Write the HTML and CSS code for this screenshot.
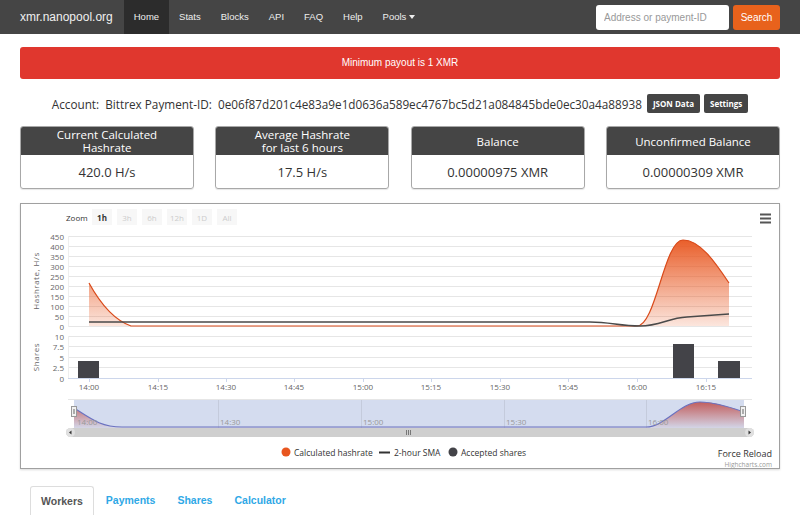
FILE: index.html
```html
<!DOCTYPE html>
<html lang="en">
<head>
  <meta charset="UTF-8">
  <title>xmr.nanopool.org</title>
  <link rel="stylesheet" href="styles.css">
</head>
<body>

  <!-- Navbar -->
  <div class="navbar">
    <a class="brand" href="#">xmr.nanopool.org</a>
    <nav class="nav">
      <a class="active" href="#">Home</a>
      <a href="#">Stats</a>
      <a href="#">Blocks</a>
      <a href="#">API</a>
      <a href="#">FAQ</a>
      <a href="#">Help</a>
      <a href="#">Pools <span class="caret"></span></a>
    </nav>
    <form class="search">
      <input type="text" placeholder="Address or payment-ID">
      <button type="button">Search</button>
    </form>
  </div>

  <div class="container">
    <div class="alert">Minimum payout is 1 XMR</div>

    <div class="account">
      <span class="account-text">Account:&nbsp; Bittrex Payment-ID:&nbsp; 0e06f87d201c4e83a9e1d0636a589ec4767bc5d21a084845bde0ec30a4a88938</span>
      <button class="btn-dark">JSON Data</button>
      <button class="btn-dark">Settings</button>
    </div>

    <!-- Stat cards -->
    <div class="cards">
      <div class="card">
        <div class="card-head"><span>Current Calculated</span><span>Hashrate</span></div>
        <div class="card-body">420.0 H/s</div>
      </div>
      <div class="card">
        <div class="card-head"><span>Average Hashrate</span><span>for last 6 hours</span></div>
        <div class="card-body">17.5 H/s</div>
      </div>
      <div class="card">
        <div class="card-head"><span>Balance</span></div>
        <div class="card-body">0.00000975 XMR</div>
      </div>
      <div class="card">
        <div class="card-head"><span>Unconfirmed Balance</span></div>
        <div class="card-body">0.00000309 XMR</div>
      </div>
    </div>

    <!-- Chart -->
    <div class="chart">
      <svg class="chart-svg" viewBox="21 204 758 264" width="758" height="264">
        <defs>
          <linearGradient id="hashFill" x1="0" y1="0" x2="0" y2="1">
            <stop offset="0" stop-color="#e8561f" stop-opacity="0.95"/>
            <stop offset="1" stop-color="#e8561f" stop-opacity="0.15"/>
          </linearGradient>
          <linearGradient id="navFill" x1="0" y1="0" x2="0" y2="1">
            <stop offset="0" stop-color="#c0504d" stop-opacity="0.9"/>
            <stop offset="1" stop-color="#c0504d" stop-opacity="0.05"/>
          </linearGradient>
        </defs>

        <!-- range selector -->
        <text x="66" y="221" class="t-zoom">Zoom</text>
        <rect x="92" y="209" width="20" height="16" fill="#f7f7f7"/>
        <text x="102" y="221" class="t-btn t-on">1h</text>
        <rect x="117" y="209" width="20" height="16" fill="#f7f7f7"/>
        <text x="127" y="221" class="t-btn">3h</text>
        <rect x="142" y="209" width="20" height="16" fill="#f7f7f7"/>
        <text x="152" y="221" class="t-btn">6h</text>
        <rect x="167" y="209" width="20" height="16" fill="#f7f7f7"/>
        <text x="177" y="221" class="t-btn">12h</text>
        <rect x="192" y="209" width="20" height="16" fill="#f7f7f7"/>
        <text x="202" y="221" class="t-btn">1D</text>
        <rect x="217" y="209" width="20" height="16" fill="#f7f7f7"/>
        <text x="227" y="221" class="t-btn">All</text>

        <!-- menu -->
        <g stroke="#555" stroke-width="2">
          <line x1="760" y1="214.5" x2="771" y2="214.5"/>
          <line x1="760" y1="218.5" x2="771" y2="218.5"/>
          <line x1="760" y1="222.5" x2="771" y2="222.5"/>
        </g>

        <!-- hashrate grid -->
        <g stroke="#e6e6e6" stroke-width="1">
          <line x1="68" y1="236.5" x2="752" y2="236.5"/>
          <line x1="68" y1="246.5" x2="752" y2="246.5"/>
          <line x1="68" y1="256.5" x2="752" y2="256.5"/>
          <line x1="68" y1="266.5" x2="752" y2="266.5"/>
          <line x1="68" y1="276.5" x2="752" y2="276.5"/>
          <line x1="68" y1="286.5" x2="752" y2="286.5"/>
          <line x1="68" y1="296.5" x2="752" y2="296.5"/>
          <line x1="68" y1="306.5" x2="752" y2="306.5"/>
          <line x1="68" y1="316.5" x2="752" y2="316.5"/>
          <line x1="68" y1="326.5" x2="752" y2="326.5"/>
          <line x1="68" y1="336.5" x2="752" y2="336.5"/>
          <line x1="68" y1="346.5" x2="752" y2="346.5"/>
          <line x1="68" y1="357.5" x2="752" y2="357.5"/>
          <line x1="68" y1="367.5" x2="752" y2="367.5"/>
        </g>
        <line x1="68" y1="378.5" x2="752" y2="378.5" stroke="#ccd6eb"/>
        <line x1="68.5" y1="236" x2="68.5" y2="327" stroke="#eee"/>
        <line x1="68.5" y1="336" x2="68.5" y2="378" stroke="#eee"/>

        <g class="t-axis" text-anchor="end">
          <text x="64" y="240">450</text>
          <text x="64" y="250">400</text>
          <text x="64" y="260">350</text>
          <text x="64" y="270">300</text>
          <text x="64" y="280">250</text>
          <text x="64" y="290">200</text>
          <text x="64" y="300">150</text>
          <text x="64" y="310">100</text>
          <text x="64" y="320">50</text>
          <text x="64" y="330">0</text>
          <text x="64" y="340">10</text>
          <text x="64" y="350">7.5</text>
          <text x="64" y="361">5</text>
          <text x="64" y="371">2.5</text>
          <text x="64" y="382">0</text>
        </g>
        <text class="t-title" transform="translate(39 281) rotate(-90)">Hashrate, H/s</text>
        <text class="t-title" transform="translate(39 357) rotate(-90)">Shares</text>

        <!-- hashrate area -->
        <path d="M89,283 C100,303 114,320 131,326 L637,326 C656,326 664,240 683,240 C700,240 715,262 729,283 L729,326 L89,326 Z" fill="url(#hashFill)"/>
        <path d="M89,283 C100,303 114,320 131,326 L637,326 C656,326 664,240 683,240 C700,240 715,262 729,283" fill="none" stroke="#d94a1a" stroke-width="1.2"/>
        <!-- SMA -->
        <path d="M89,322 L590,322 C610,322 620,326 640,326 C660,326 668,318 687,317 C700,316 715,315 729,314" fill="none" stroke="#4a4a4a" stroke-width="1.5"/>

        <!-- share bars -->
        <rect x="78" y="361" width="21" height="17" fill="#434348"/>
        <rect x="673" y="344" width="21" height="34" fill="#434348"/>
        <rect x="718" y="361" width="22" height="17" fill="#434348"/>

        <!-- x axis -->
        <g stroke="#ccd6eb">
          <line x1="89.5" y1="378" x2="89.5" y2="382"/>
          <line x1="158.5" y1="378" x2="158.5" y2="382"/>
          <line x1="226.5" y1="378" x2="226.5" y2="382"/>
          <line x1="294.5" y1="378" x2="294.5" y2="382"/>
          <line x1="363.5" y1="378" x2="363.5" y2="382"/>
          <line x1="431.5" y1="378" x2="431.5" y2="382"/>
          <line x1="500.5" y1="378" x2="500.5" y2="382"/>
          <line x1="568.5" y1="378" x2="568.5" y2="382"/>
          <line x1="637.5" y1="378" x2="637.5" y2="382"/>
          <line x1="706.5" y1="378" x2="706.5" y2="382"/>
        </g>
        <g class="t-axis" text-anchor="middle">
          <text x="89" y="390">14:00</text>
          <text x="158" y="390">14:15</text>
          <text x="226" y="390">14:30</text>
          <text x="294" y="390">14:45</text>
          <text x="363" y="390">15:00</text>
          <text x="431" y="390">15:15</text>
          <text x="500" y="390">15:30</text>
          <text x="568" y="390">15:45</text>
          <text x="637" y="390">16:00</text>
          <text x="706" y="390">16:15</text>
        </g>

        <!-- navigator -->
        <rect x="74" y="400" width="670" height="28" fill="#d4dcef"/>
        <g stroke="#c4cbdc">
          <line x1="218.5" y1="400" x2="218.5" y2="428"/>
          <line x1="361.5" y1="400" x2="361.5" y2="428"/>
          <line x1="504.5" y1="400" x2="504.5" y2="428"/>
          <line x1="646.5" y1="400" x2="646.5" y2="428"/>
        </g>
        <path d="M74,408 C90,418 100,427 122,427 L646,427 C665,427 680,402 700,402 C715,402 730,407 744,412 L744,428 L74,428 Z" fill="url(#navFill)"/>
        <path d="M74,408 C90,418 100,427 122,427 L646,427 C665,427 680,402 700,402 C715,402 730,407 744,412" fill="none" stroke="#6a72c0" stroke-width="1.2"/>
        <g class="t-nav">
          <text x="77" y="425">14:00</text>
          <text x="220" y="425">14:30</text>
          <text x="363" y="425">15:00</text>
          <text x="506" y="425">15:30</text>
          <text x="648" y="425">16:00</text>
        </g>
        <line x1="68" y1="399.5" x2="752" y2="399.5" stroke="#e6e6e6"/>
        <rect x="71.5" y="406.5" width="5" height="10" fill="#f2f2f2" stroke="#999"/>
        <line x1="74" y1="409" x2="74" y2="414" stroke="#666"/>
        <rect x="740.5" y="406.5" width="5" height="10" fill="#f2f2f2" stroke="#999"/>
        <line x1="743" y1="409" x2="743" y2="414" stroke="#666"/>

        <!-- scrollbar -->
        <rect x="66" y="428" width="688" height="9" rx="4.5" fill="#cfcfcf"/>
        <circle cx="70.5" cy="432.5" r="4.5" fill="#e0e0e0"/>
        <circle cx="749.5" cy="432.5" r="4.5" fill="#e0e0e0"/>
        <path d="M71.5,430.5 L69,432.5 L71.5,434.5 Z" fill="#333"/>
        <path d="M748.5,430.5 L751,432.5 L748.5,434.5 Z" fill="#333"/>
        <g stroke="#777">
          <line x1="406.5" y1="430" x2="406.5" y2="435"/>
          <line x1="408.5" y1="430" x2="408.5" y2="435"/>
          <line x1="410.5" y1="430" x2="410.5" y2="435"/>
        </g>

        <!-- legend -->
        <circle cx="286" cy="452" r="4.5" fill="#e8561f"/>
        <text x="294" y="456" class="t-legend">Calculated hashrate</text>
        <line x1="379" y1="452.5" x2="390" y2="452.5" stroke="#333" stroke-width="2"/>
        <text x="394" y="456" class="t-legend">2-hour SMA</text>
        <circle cx="453" cy="452" r="4.5" fill="#434348"/>
        <text x="461" y="456" class="t-legend">Accepted shares</text>

        <text x="772" y="457" class="t-reload" text-anchor="end">Force Reload</text>
        <text x="772" y="467" class="t-credit" text-anchor="end">Highcharts.com</text>
      </svg>
    </div>

    <!-- Tabs -->
    <ul class="tabs">
      <li class="active">Workers</li>
      <li>Payments</li>
      <li>Shares</li>
      <li>Calculator</li>
    </ul>
  </div>

</body>
</html>
```

FILE: styles.css
```css
body {
  margin: 0;
  padding: 0;
  font-family: "Liberation Sans", Arial, sans-serif;
  background-color: #fff;
  color: #333;
}
.navbar {
  height: 34px;
  background-color: #454545;
  display: flex;
  align-items: stretch;
  padding: 0 20px;
}
.brand {
  color: #f0f0f0;
  text-decoration: none;
  font-size: 12px;
  line-height: 34px;
  margin-right: 11px;
}
.nav {
  display: flex;
}
.nav a {
  color: #eee;
  text-decoration: none;
  font-size: 9.5px;
  line-height: 34px;
  padding: 0 10px;
}
.nav a.active {
  background-color: #2c2c2c;
}
.caret {
  display: inline-block;
  width: 0;
  height: 0;
  border-top: 4px solid #eee;
  border-left: 3px solid transparent;
  border-right: 3px solid transparent;
  vertical-align: middle;
}
.search {
  margin-left: auto;
  display: flex;
  align-items: center;
  gap: 4px;
}
.search input {
  width: 133px;
  height: 25px;
  box-sizing: border-box;
  border: none;
  border-radius: 3px;
  padding: 0 8px;
  font-family: "Liberation Sans", Arial, sans-serif;
  font-size: 10px;
}
.search input::placeholder {
  color: #999;
}
.search button {
  height: 25px;
  width: 47px;
  border: none;
  border-radius: 3px;
  background-color: #e8621c;
  color: #fff;
  font-family: "Liberation Sans", Arial, sans-serif;
  font-size: 10px;
  padding: 0;
}
.container {
  padding: 0 20px;
}
.alert {
  margin-top: 13px;
  height: 32px;
  line-height: 32px;
  background-color: #e0372e;
  color: #fff;
  text-align: center;
  font-size: 10px;
  border-radius: 3px;
}
.account {
  display: flex;
  justify-content: center;
  align-items: center;
  gap: 4px;
  margin-top: 14px;
  height: 21px;
  font-family: "Open Sans", sans-serif;
}
.account-text {
  font-size: 11.75px;
  color: #333;
  margin-right: 1px;
}
.btn-dark {
  background-color: #454545;
  color: #fff;
  border: none;
  border-radius: 2px;
  height: 19px;
  padding: 0 6px;
  font-family: "Open Sans", sans-serif;
  font-size: 8px;
  font-weight: bold;
}
.cards {
  display: grid;
  grid-template-columns: repeat(4, 174px);
  justify-content: space-between;
  margin-top: 12px;
  font-family: "Open Sans", sans-serif;
}
.card {
  border: 1px solid #a8a8a8;
  border-radius: 3px;
  overflow: hidden;
  height: 63px;
  box-sizing: border-box;
  box-shadow: 0 1px 1px rgba(0,0,0,0.1);
  display: flex;
  flex-direction: column;
}
.card-head {
  background-color: #454545;
  color: #fff;
  text-align: center;
  height: 28px;
  display: flex;
  flex-direction: column;
  align-items: center;
  justify-content: center;
  font-size: 11.5px;
  line-height: 13px;
}
.card-body {
  flex-grow: 1;
  display: flex;
  align-items: center;
  justify-content: center;
  font-size: 13px;
  color: #333;
}
.chart {
  margin-top: 14px;
  border: 1px solid #a0a0a0;
  height: 264px;
  box-shadow: 0 1px 2px rgba(0,0,0,0.15);
  font-family: "Open Sans", sans-serif;
}
.chart-svg {
  display: block;
}
.t-zoom {
  font-size: 8px;
  fill: #333;
}
.t-btn {
  font-size: 8px;
  fill: #ccc;
  text-anchor: middle;
}
.t-btn.t-on {
  fill: #333;
  font-weight: bold;
}
.t-axis {
  font-size: 8px;
  fill: #666;
}
.t-title {
  font-size: 8px;
  fill: #666;
  text-anchor: middle;
  letter-spacing: 0.5px;
}
.t-nav {
  font-size: 8px;
  fill: #999;
}
.t-legend {
  font-size: 8.5px;
  fill: #333;
}
.t-reload {
  font-size: 9px;
  fill: #333;
}
.t-credit {
  font-size: 6.5px;
  fill: #999;
}
.tabs {
  list-style: none;
  display: flex;
  margin: 17px 0 0 0;
  padding: 0 0 0 10px;
  border-bottom: 1px solid #ddd;
  font-family: "Liberation Sans", Arial, sans-serif;
  font-weight: bold;
  font-size: 10.5px;
}
.tabs li {
  padding: 8px 10px;
  line-height: 12px;
  color: #2fa8e6;
  margin-right: 2px;
}
.tabs li.active {
  color: #555;
  border: 1px solid #ddd;
  border-bottom-color: #fff;
  border-radius: 3px 3px 0 0;
  margin-bottom: -1px;
}
```
